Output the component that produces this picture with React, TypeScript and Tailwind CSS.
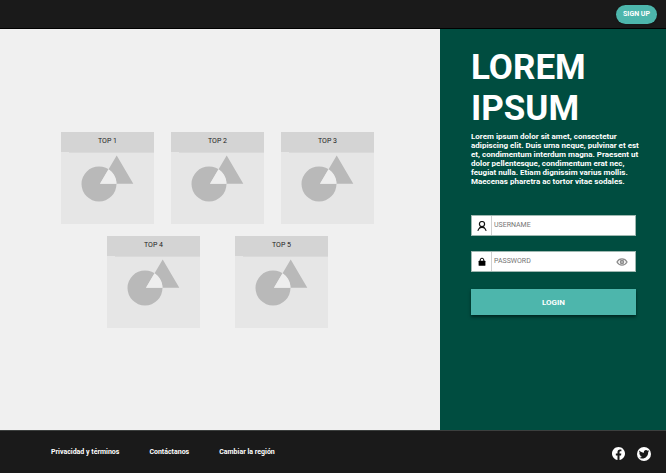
import React from "react";

function Shapes() {
  return (
    <svg viewBox="0 0 93 71" className="block w-full" aria-hidden="true">
      <path
        fill="#b9b9b9"
        fillRule="evenodd"
        d="M20.5 31a17.5 17.5 0 1 0 35 0a17.5 17.5 0 1 0 -35 0ZM55.7 2.5L72.3 30.7H39Z"
      />
      <path fill="#eeeeee" d="M39 30.7L47.5 16.2A17.5 17.5 0 0 1 55.5 30.7Z" />
    </svg>
  );
}

function Card({ title }: { title: string }) {
  return (
    <article className="w-[93px] bg-[#e6e6e6]">
      <h2 className="flex h-5 items-center justify-center bg-[#d4d4d4] pb-px text-[7px] leading-[9px] text-[#222]">
        {title}
      </h2>
      <div className="ml-2 h-px bg-[#dadada]" />
      <Shapes />
    </article>
  );
}

function UserIcon() {
  return (
    <svg viewBox="0 0 10 10" className="size-[10px]" fill="none" stroke="#111" strokeWidth="1.2" aria-hidden="true">
      <circle cx="5" cy="3.1" r="2.6" />
      <path d="M0.9 9.9C1 8.600 2 7.500 3.700 5.500M9.100 9.900C9 8.600 8 7.500 6.300 5.500M2.300 7.200C3.500 6.200 6.500 6.200 7.700 7.200" />
    </svg>
  );
}

function LockIcon() {
  return (
    <svg viewBox="0 0 10 10" className="size-[10px]" aria-hidden="true">
      <rect x="1.600" y="3.800" width="6.800" height="4.900" rx="0.500" fill="#000" />
      <path d="M3.200 4.500V3a1.800 1.800 0 0 1 3.600 0V4.500" fill="none" stroke="#000" strokeWidth="1" />
    </svg>
  );
}

function EyeIcon() {
  return (
    <svg viewBox="0 0 12 10" className="h-[10px] w-3" fill="none" stroke="#8c8c8c" aria-hidden="true">
      <path d="M1 5C2.200 2.800 4 1.900 6 1.900S9.800 2.800 11 5C9.800 7.200 8 8.100 6 8.100S2.200 7.200 1 5Z" strokeWidth="1.300" />
      <circle cx="6" cy="5" r="1.700" fill="#b5b5b5" strokeWidth="1.200" />
    </svg>
  );
}

function Field({
  id,
  type,
  label,
  icon,
  children,
}: {
  id: string;
  type: string;
  label: string;
  icon: React.ReactNode;
  children?: React.ReactNode;
}) {
  return (
    <div className="flex h-[21px] border border-[#9fb8b1] bg-white">
      <label htmlFor={id} aria-label={label} className="flex w-5 shrink-0 items-center justify-center border-r border-[#d0d0d0]">
        {icon}
      </label>
      <input
        id={id}
        type={type}
        placeholder={label}
        className="min-w-0 flex-1 px-0.5 pb-px text-[7px] leading-[9px] text-[#444] outline-none placeholder:text-[#757575]"
      />
      {children}
    </div>
  );
}

export default function App() {
  return (
    <div className="flex min-h-screen flex-col bg-[#1a1a1a] font-['Roboto',sans-serif]">
      <header className="flex h-[29px] items-center justify-end border-b border-black px-[9px]">
        <button type="button" className="h-[19px] rounded-full bg-[#4db6ac] px-[7px] text-[7px] leading-[9px] font-bold text-white shadow">
          SIGN UP
        </button>
      </header>

      <div className="flex flex-1">
        <main className="flex flex-1 flex-col items-center justify-center gap-3 bg-[#f0f0f0] pr-[5px]">
          <div className="flex gap-[17px]">
            <Card title="TOP 1" />
            <Card title="TOP 2" />
            <Card title="TOP 3" />
          </div>
          <div className="flex gap-[35px]">
            <Card title="TOP 4" />
            <Card title="TOP 5" />
          </div>
        </main>

        <aside className="w-[226px] bg-[#004d40] pt-[18px] pr-[30px] pl-[31px] text-white">
          <h1 className="text-[35px] leading-[41px] font-bold">LOREM IPSUM</h1>
          <p className="mt-[3px] text-[8px] leading-[9px] font-bold whitespace-nowrap">
            Lorem ipsum dolor sit amet, consectetur
            <br />
            adipiscing elit. Duis urna neque, pulvinar et est
            <br />
            et, condimentum interdum magna. Praesent ut
            <br />
            dolor pellentesque, condimentum erat nec,
            <br />
            feugiat nulla. Etiam dignissim varius mollis.
            <br />
            Maecenas pharetra ac tortor vitae sodales.
          </p>
          <form className="mt-[29px] flex flex-col" onSubmit={(e) => e.preventDefault()}>
            <div className="flex flex-col gap-[15px]">
              <Field id="username" type="text" label="USERNAME" icon={<UserIcon />} />
              <Field id="password" type="password" label="PASSWORD" icon={<LockIcon />}>
                <button type="button" aria-label="Mostrar" className="flex items-center pr-[7px]">
                  <EyeIcon />
                </button>
              </Field>
            </div>
            <button type="submit" className="mt-[17px] h-[26px] bg-[#4db6ac] text-[8px] leading-[9px] font-bold shadow-[0_2px_3px_rgba(0,0,0,0.5)]">
              LOGIN
            </button>
          </form>
        </aside>
      </div>

      <footer className="flex h-[43px] items-center justify-between border-t border-[#3c3f3e] pr-[15px] pl-[51px] text-white">
        <nav className="flex gap-[30px] text-[7px] leading-[9px] font-bold">
          <a href="#privacidad">Privacidad y términos</a>
          <a href="#contacto">Contáctanos</a>
          <a href="#region">Cambiar la región</a>
        </nav>
        <div className="flex items-center gap-3 pt-[3px]">
          <a href="#facebook" aria-label="Facebook">
            <svg viewBox="0 0 24 24" className="size-[13px]" fill="#fff" aria-hidden="true">
              <path d="M24 12.070C24 5.400 18.630 0 12 0S0 5.400 0 12.070C0 18.100 4.390 23.090 10.130 24v-8.440H7.080v-3.490h3.050V9.410c0-3.020 1.790-4.690 4.530-4.690 1.310 0 2.690.240 2.690.240v2.970h-1.520c-1.490 0-1.950.930-1.950 1.880v2.260h3.320l-.530 3.490h-2.790V24C19.610 23.090 24 18.100 24 12.070z" />
            </svg>
          </a>
          <a href="#twitter" aria-label="Twitter">
            <svg viewBox="0 0 24 24" className="size-[14px]" aria-hidden="true">
              <circle cx="12" cy="12" r="12" fill="#fff" />
              <path
                transform="translate(3 3.500) scale(0.750)"
                fill="#1a1a1a"
                d="M23.950 4.570a10 10 0 0 1-2.820.770 4.960 4.960 0 0 0 2.160-2.720c-.950.550-2 .950-3.130 1.180a4.920 4.920 0 0 0-8.380 4.480C7.690 8.090 4.070 6.130 1.640 3.160a4.920 4.920 0 0 0 1.520 6.570 4.900 4.900 0 0 1-2.230-.610v.060a4.920 4.920 0 0 0 3.950 4.830 5 5 0 0 1-2.210.080 4.940 4.940 0 0 0 4.600 3.420A9.870 9.870 0 0 1 0 19.540a14 14 0 0 0 7.550 2.210c9.050 0 14-7.500 14-13.980v-.640a9.940 9.940 0 0 0 2.400-2.560z"
              />
            </svg>
          </a>
        </div>
      </footer>
    </div>
  );
}
